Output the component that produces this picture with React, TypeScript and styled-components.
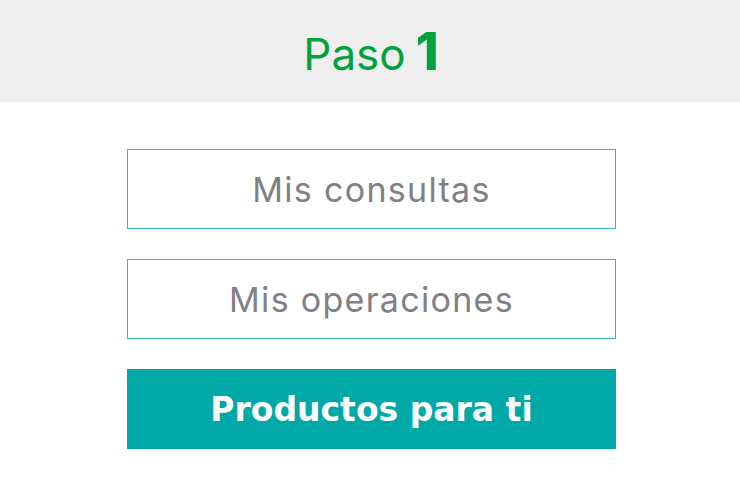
import React from "react";
import styled, { createGlobalStyle } from "styled-components";

const Global = createGlobalStyle`
  html, body { margin: 0; padding: 0; background: #ffffff; }
  body { font-family: "Inter", "Noto Sans", sans-serif; }
`;

const Header = styled.header`
  height: 102px;
  background: #efefef;
  display: flex;
  align-items: center;
  justify-content: center;
`;

const Title = styled.h1`
  margin: 0;
  color: #00a23a;
  font-family: "Inter", sans-serif;
  font-weight: 400;
  font-size: 44px;
  line-height: 1;
  display: flex;
  align-items: baseline;
  gap: 10px;
  padding-left: 2px;
  padding-top: 2px;
`;

const StepNumber = styled.span`
  font-weight: 800;
  font-size: 52px;
`;

const Menu = styled.nav`
  display: flex;
  flex-direction: column;
  gap: 30px;
  width: 489px;
  margin: 47px 0 0 127px;
`;

const Option = styled.button<{ $primary?: boolean }>`
  height: 80px;
  box-sizing: border-box;
  border: 1px solid ${(p) => (p.$primary ? "#00a8a8" : "#3ab5b3")};
  background: ${(p) => (p.$primary ? "#00a8a8" : "#ffffff")};
  color: ${(p) => (p.$primary ? "#ffffff" : "#808085")};
  font-family: ${(p) => (p.$primary ? '"DejaVu Sans", sans-serif' : '"Inter", sans-serif')};
  font-size: ${(p) => (p.$primary ? "33px" : "34px")};
  font-weight: ${(p) => (p.$primary ? 700 : 400)};
  letter-spacing: ${(p) => (p.$primary ? "0" : "1.3px")};
  display: flex;
  align-items: center;
  justify-content: center;
  padding: 0;
  cursor: pointer;
`;

export default function App() {
  return (
    <>
      <Global />
      <Header>
        <Title>
          Paso <StepNumber>1</StepNumber>
        </Title>
      </Header>
      <Menu>
        <Option>Mis consultas</Option>
        <Option>Mis operaciones</Option>
        <Option $primary>Productos para ti</Option>
      </Menu>
    </>
  );
}
